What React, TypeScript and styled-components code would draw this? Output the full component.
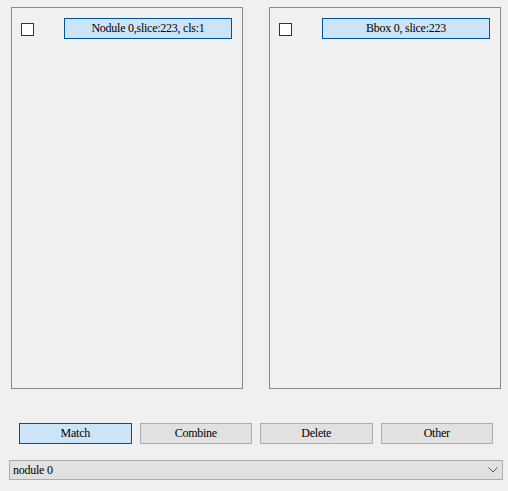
import React from "react";
import styled, { createGlobalStyle } from "styled-components";

const GlobalStyle = createGlobalStyle`
  html, body {
    margin: 0;
    padding: 0;
    background: #f0f0f0;
  }
  body {
    font-family: "Liberation Serif", "Times New Roman", serif;
    font-size: 12px;
    letter-spacing: -0.25px;
    color: #000;
  }
`;

const panels = [
  { id: "nodule", label: "Nodule 0,slice:223, cls:1" },
  { id: "bbox", label: "Bbox 0, slice:223" },
];

const actions = ["Match", "Combine", "Delete", "Other"];

export default function App() {
  return (
    <>
      <GlobalStyle />
      <Window>
        <PanelRow>
          {panels.map((p) => (
            <ListPanel key={p.id}>
              <ItemRow>
                <CheckBox />
                <ItemLabel>{p.label}</ItemLabel>
              </ItemRow>
            </ListPanel>
          ))}
        </PanelRow>
        <ButtonRow>
          {actions.map((a, i) => (
            <ActionButton key={a} $active={i === 0}>
              {a}
            </ActionButton>
          ))}
        </ButtonRow>
        <ComboBox>
          <span>nodule 0</span>
          <svg width="10" height="6" viewBox="0 0 10 6">
            <path d="M0.5 0.5 L5 5 L9.5 0.5" fill="none" stroke="#555" strokeWidth="1" />
          </svg>
        </ComboBox>
      </Window>
    </>
  );
}

const Window = styled.div`
  width: 508px;
  height: 491px;
  box-sizing: border-box;
  padding-top: 7px;
  display: flex;
  flex-direction: column;
`;

const PanelRow = styled.div`
  display: flex;
  gap: 26px;
  padding-left: 11px;
`;

const ListPanel = styled.div`
  width: 232px;
  height: 382px;
  box-sizing: border-box;
  border: 1px solid #8a8a8a;
`;

const ItemRow = styled.div`
  display: flex;
  align-items: center;
  padding: 10px 0 0 9px;
`;

const CheckBox = styled.div`
  width: 13px;
  height: 13px;
  box-sizing: border-box;
  border: 1px solid #333;
  background: #fff;
  margin-right: 30px;
  margin-top: 1px;
`;

const ItemLabel = styled.div`
  width: 168px;
  height: 21px;
  box-sizing: border-box;
  border: 1px solid #005499;
  background: #cce4f7;
  display: flex;
  align-items: center;
  justify-content: center;
  white-space: nowrap;
`;

const ButtonRow = styled.div`
  display: grid;
  grid-template-columns: repeat(4, 1fr);
  gap: 8px;
  margin: 34px 0 0 19px;
  width: 474px;
`;

const ActionButton = styled.div<{ $active?: boolean }>`
  height: 21px;
  box-sizing: border-box;
  border: 1px solid ${(p) => (p.$active ? "#005499" : "#adadad")};
  background: ${(p) => (p.$active ? "#cce4f7" : "#e1e1e1")};
  display: flex;
  align-items: center;
  justify-content: center;
`;

const ComboBox = styled.div`
  margin: 16px 0 0 9px;
  width: 494px;
  height: 20px;
  box-sizing: border-box;
  border: 1px solid #adadad;
  background: #e1e1e1;
  display: flex;
  align-items: center;
  justify-content: space-between;
  padding: 0 4px 0 3px;
`;
